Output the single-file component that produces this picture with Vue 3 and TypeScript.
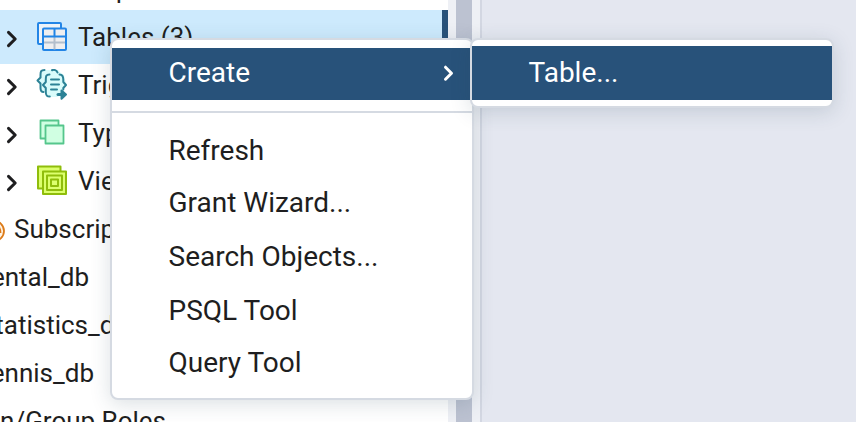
<script setup lang="ts">
interface TreeNode {
  label: string
  icon?: 'tables' | 'triggers' | 'types' | 'views' | 'subscriptions'
  kind: 'child' | 'sub' | 'db' | 'roles'
  selected?: boolean
}

const nodes: TreeNode[] = [
  { label: 'Sequences', kind: 'child' },
  { label: 'Tables (3)', icon: 'tables', kind: 'child', selected: true },
  { label: 'Trigger Functions', icon: 'triggers', kind: 'child' },
  { label: 'Types', icon: 'types', kind: 'child' },
  { label: 'Views', icon: 'views', kind: 'child' },
  { label: 'Subscriptions', icon: 'subscriptions', kind: 'sub' },
  { label: 'rental_db', kind: 'db' },
  { label: 'statistics_db', kind: 'db' },
  { label: 'tennis_db', kind: 'db' },
  { label: 'Login/Group Roles', kind: 'roles' },
]

const actions: { label: string; tall?: boolean }[] = [
  { label: 'Refresh' },
  { label: 'Grant Wizard...' },
  { label: 'Search Objects...', tall: true },
  { label: 'PSQL Tool' },
  { label: 'Query Tool' },
]
</script>

<template>
  <div class="app">
    <div class="tree">
      <div v-for="n in nodes" :key="n.label" class="row" :class="[n.kind, { selected: n.selected }]">
        <svg v-if="n.kind === 'child'" class="chev" viewBox="0 0 12 18">
          <path d="M2.500 2.400 9.200 9l-6.700 6.600" />
        </svg>
        <span v-if="n.kind === 'child'" class="icon">
          <svg v-if="n.icon === 'tables'" viewBox="0 0 32 32">
            <rect x="2" y="2" width="23" height="21" rx="1" fill="#eef3f8" stroke="#2385e6" stroke-width="2" />
            <rect x="7" y="7.500" width="23" height="21.500" rx="1" fill="#f0eff0" stroke="#2385e6" stroke-width="2" />
            <path d="M8 21.500h21M18.500 15.500v13" stroke="#b4bfcc" stroke-width="2" />
            <path d="M7 15.500h23M18.500 8v7.500" stroke="#2385e6" stroke-width="2" />
          </svg>
          <svg v-else-if="n.icon === 'triggers'" viewBox="0 0 32 32" fill="none" stroke="#2c8296" stroke-width="2" stroke-linecap="round" stroke-linejoin="round">
            <path d="M7 1h15l3 3 3 2 1 5 2 5-3 4-1 5-6 3h-9l-3-5-5-1v-6l-2-3 3-4V4z" fill="#d9fcfb" stroke="none" />
            <path d="M8.500 1C5 1 4.500 2.500 4.500 6v2.500L1.500 11.500l3 3V19c0 3 1 4 3 4" />
            <path d="M16 1.200c2-.8 4.500-.2 5.500 2.300M13.500 5.500C10 5.500 9.800 7 9.800 10.500V13L7 16l2.800 3v4c0 3.500 1 4.500 4 4.500" />
            <path d="M23.500 5.500c3 0 3.800 1.500 3.800 5V13l2.700 3-2.700 3v1.500" />
            <path d="M15 10.500h8M15 15.500h8M15 20.500h6" />
            <path d="M22 25.500h5" stroke-width="3" />
            <path d="M25.500 21.500 30 25.500l-4.500 4.200z" fill="#2c8296" />
          </svg>
          <svg v-else-if="n.icon === 'types'" viewBox="0 0 32 32" fill="#d0ffe2" stroke="#55c68c" stroke-width="1.800" stroke-linejoin="round">
            <rect x="4.500" y="3.500" width="18" height="18" />
            <rect x="9.500" y="8.500" width="18" height="18" />
          </svg>
          <svg v-else-if="n.icon === 'views'" viewBox="0 0 32 32" fill="#dcff6d" stroke="#8fbd0b" stroke-width="2" stroke-linejoin="round">
            <rect x="2" y="1.500" width="22.500" height="22" />
            <rect x="7" y="6.500" width="23" height="22.500" />
            <rect x="11" y="10.500" width="15" height="14.500" />
            <rect x="15" y="14.500" width="7" height="6.500" />
          </svg>
        </span>
        <svg v-if="n.icon === 'subscriptions'" class="sub-icon" viewBox="0 0 24 26">
          <ellipse cx="12" cy="15" rx="11" ry="10.500" fill="#fff4e5" stroke="#dc7b19" stroke-width="1.800" />
          <path d="M15 8c3 2 4.500 4 4.500 9" fill="none" stroke="#dc7b19" stroke-width="1.800" />
        </svg>
        <span class="label">{{ n.label }}</span>
      </div>
    </div>
    <div class="track"><div class="thumb"></div></div>
    <div class="workspace"></div>

    <div class="menu main-menu">
      <div class="item active">
        <span>Create</span>
        <svg class="chev" viewBox="0 0 12 18"><path d="M3.500 3.200 9.500 9.200l-6 6" /></svg>
      </div>
      <div class="separator"></div>
      <div v-for="a in actions" :key="a.label" class="item" :class="{ tall: a.tall }">{{ a.label }}</div>
    </div>

    <div class="menu submenu">
      <div class="item active">Table...</div>
    </div>
  </div>
</template>

<style>
body {
  margin: 0;
  overflow: hidden;
}
</style>

<style scoped>
.app {
  position: relative;
  display: flex;
  width: 856px;
  height: 422px;
  overflow: hidden;
  background: #fff;
  color: #1e1e20;
  font-family: Roboto, sans-serif;
}
.tree {
  width: 448px;
  flex: none;
  margin-top: -35px;
  font-size: 26px;
}
.row {
  display: flex;
  align-items: center;
  height: 48px;
  box-sizing: border-box;
  white-space: nowrap;
}
.row.child {
  padding-left: 6px;
}
.row.selected {
  height: 54px;
  margin: -3px 0;
  background: #cdeafd;
  border-right: 6px solid #28527a;
}
.row.sub {
  margin-left: -19px;
}
.row.db,
.row.roles {
  justify-content: flex-end;
}
.row.db {
  width: 89px;
}
.row.db:nth-child(8) {
  width: 129px;
}
.row.db:nth-child(9) {
  width: 94px;
}
.row.roles {
  width: 166px;
}
.chev {
  width: 12px;
  height: 18px;
  flex: none;
  fill: none;
  stroke: #1e1e20;
  stroke-width: 3;
  stroke-linecap: round;
  stroke-linejoin: round;
}
.row .chev {
  margin-top: 3px;
}
.icon {
  width: 32px;
  height: 32px;
  flex: none;
  margin: 0 10px 0 18px;
}
.icon svg {
  display: block;
  width: 32px;
  height: 32px;
}
.sub-icon {
  width: 24px;
  height: 26px;
  margin-right: 9px;
}
.track {
  width: 32px;
  flex: none;
  display: flex;
  justify-content: center;
  padding-right: 0;
  background: #eef0f5;
  border-right: 2px solid #d3d7e2;
}
.thumb {
  width: 16px;
  background: #bcc2d1;
}
.workspace {
  flex: 1;
  background: #e4e7f0;
}
.menu {
  position: absolute;
  box-sizing: border-box;
  width: 364px;
  background: #fff;
  border: 2px solid #d5dae2;
  border-radius: 8px;
  box-shadow: 0 4px 20px rgba(40, 70, 90, 0.17);
  font-size: 28px;
  overflow: hidden;
}
.main-menu {
  left: 110px;
  top: 38px;
  height: 362px;
  padding-top: 8px;
}
.submenu {
  left: 470px;
  top: 38px;
  padding: 6px 0;
}
.item {
  display: flex;
  align-items: center;
  justify-content: space-between;
  box-sizing: border-box;
  height: 52px;
  padding: 0 18px 0 56.5px;
  white-space: nowrap;
}
.item.tall {
  height: 56px;
}
.item.active {
  padding-bottom: 3px;
  background: #28527a;
  color: #fff;
}
.item.active .chev {
  stroke: #fff;
}
.submenu .item.active {
  height: 54px;
  padding-bottom: 2px;
}
.separator {
  height: 2px;
  margin: 11px 0;
  background: #d5dae2;
}
</style>
